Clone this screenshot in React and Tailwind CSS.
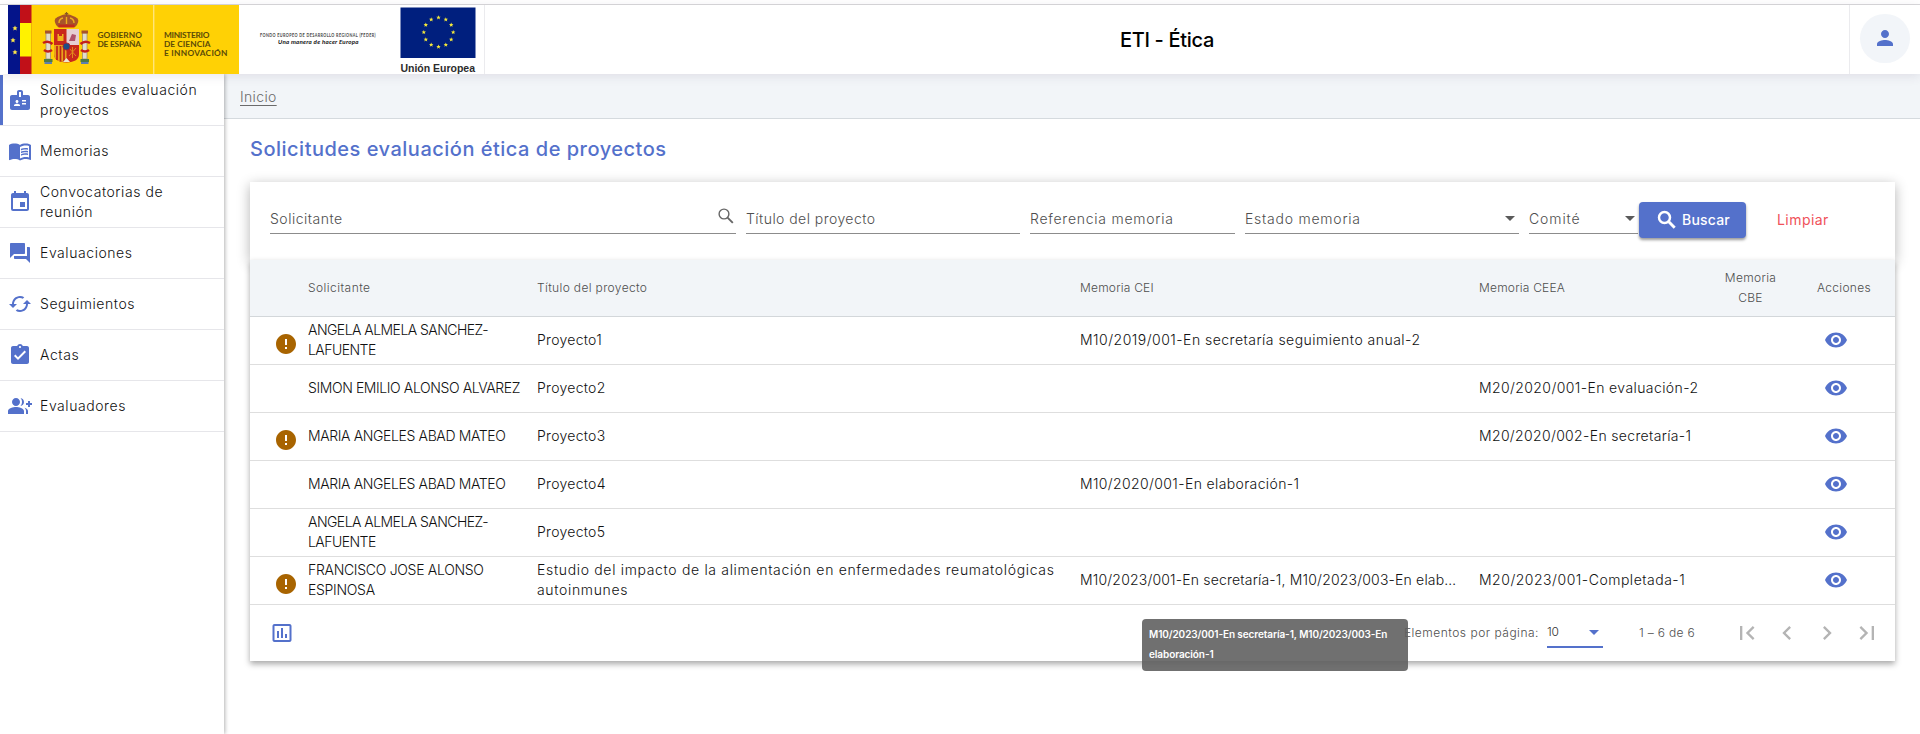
import React from 'react';
import {
  MdBadge, MdMenuBook, MdEvent, MdQuestionAnswer, MdCached, MdAssignmentTurnedIn, MdGroupAdd,
  MdPerson, MdArrowDropDown, MdError, MdRemoveRedEye, MdInsertChartOutlined,
  MdFirstPage, MdChevronLeft, MdChevronRight, MdLastPage,
} from 'react-icons/md';

const NAV = [
  { icon: MdBadge, lines: ['Solicitudes evaluación', 'proyectos'], active: true },
  { icon: MdMenuBook, lines: ['Memorias'] },
  { icon: MdEvent, lines: ['Convocatorias de', 'reunión'] },
  { icon: MdQuestionAnswer, lines: ['Evaluaciones'] },
  { icon: MdCached, lines: ['Seguimientos'] },
  { icon: MdAssignmentTurnedIn, lines: ['Actas'] },
  { icon: MdGroupAdd, lines: ['Evaluadores'] },
];

const ROWS = [
  { warn: true, name: ['ANGELA ALMELA SANCHEZ-', 'LAFUENTE'], title: ['Proyecto1'], cei: 'M10/2019/001-En secretaría seguimiento anual-2', ceea: '', tight: 'tracking-[-0.54px]' },
  { warn: false, name: ['SIMON EMILIO ALONSO ALVAREZ'], title: ['Proyecto2'], cei: '', ceea: 'M20/2020/001-En evaluación-2', tight: 'tracking-[-0.4px]' },
  { warn: true, name: ['MARIA ANGELES ABAD MATEO'], title: ['Proyecto3'], cei: '', ceea: 'M20/2020/002-En secretaría-1', ceeaTracking: 'tracking-[0.34px]', tight: 'tracking-[-0.37px]' },
  { warn: false, name: ['MARIA ANGELES ABAD MATEO'], title: ['Proyecto4'], cei: 'M10/2020/001-En elaboración-1', ceiTracking: 'tracking-[0.37px]', ceea: '', tight: 'tracking-[-0.37px]' },
  { warn: false, name: ['ANGELA ALMELA SANCHEZ-', 'LAFUENTE'], title: ['Proyecto5'], cei: '', ceea: '', tight: 'tracking-[-0.54px]' },
  { warn: true, name: ['FRANCISCO JOSE ALONSO', 'ESPINOSA'], title: ['Estudio del impacto de la alimentación en enfermedades reumatológicas', 'autoinmunes'], cei: 'M10/2023/001-En secretaría-1, M10/2023/003-En elab…', ceiTracking: 'tracking-[0.18px]', ceea: 'M20/2023/001-Completada-1', ceeaTracking: 'tracking-[0.51px]', tight: 'tracking-[-0.3px]' },
];

const GRID = 'grid grid-cols-[58px_229px_543px_399px_239px_65px_112px] items-center border-b';

function Lines({ items }) {
  return items.map((l) => <div key={l} className="whitespace-nowrap">{l}</div>);
}

function SpainLogo() {
  return (
    <svg width="231.500" height="69" viewBox="0 0 231.500 69" className="block shrink-0">
      <rect width="231.500" height="69" fill="#ffd105" />
      <rect width="12" height="69" fill="#04148a" />
      <rect x="12" width="11.5" height="69" fill="#c11018" />
      <rect x="12" y="18" width="11.5" height="33.5" fill="#fff200" />
      <g fill="#fbe44a">
        <path d="M7 20.5l.8 1.7 1.8.2-1.3 1.2.3 1.8L7 24.500l-1.600.9.3-1.800-1.300-1.200 1.800-.2z" />
        <path d="M5 32.500l.8 1.700 1.800.2-1.300 1.200.3 1.800L5 36.500l-1.600.9.3-1.800-1.300-1.200 1.800-.2z" />
        <path d="M7 44.500l.8 1.700 1.800.2-1.300 1.200.3 1.800L7 48.500l-1.600.9.3-1.800-1.300-1.200 1.800-.2z" />
      </g>
      <rect x="145" width="1.400" height="69" fill="#ffe57a" />
      <g>
        <path d="M50 22q-5-5-2.500-8.500Q51 10.500 58.500 9q7.500 1.500 11 4.500Q72 17 67 22z" fill="#a8542a" />
        <path d="M51 18q0-4 4-5M58.500 12v7M66 18q0-4-4-5" stroke="#efae1c" strokeWidth="1.400" fill="none" />
        <rect x="50.500" y="19.500" width="16" height="3" fill="#c22a1c" />
        <path d="M58.500 7v4M56.800 8.500h3.400" stroke="#8a5a20" strokeWidth="1.200" />
        <rect x="38" y="28" width="4.500" height="26" fill="#e2dccb" stroke="#8f8775" strokeWidth=".7" />
        <rect x="74.500" y="28" width="4.500" height="26" fill="#e2dccb" stroke="#8f8775" strokeWidth=".7" />
        <path d="M37 27h6.500M73.500 27H80" stroke="#a8542a" strokeWidth="3" />
        <path d="M36 55.500h8.500M72.500 55.500H81" stroke="#4f7a45" strokeWidth="3" />
        <path d="M36.500 58h7.500M73 58h7.500" stroke="#5d7fb0" strokeWidth="1.800" />
        <path d="M35 38q5-3 9.500 1M82 38q-5-3-9.500 1M36 45q4 3 8 0M81 45q-4 3-8 0" stroke="#c41f1a" strokeWidth="2.600" fill="none" />
        <path d="M46 24h25v25q0 8-12.500 8.500Q46 57 46 49z" fill="#c9281c" />
        <path d="M58.500 24H71v16H58.500z" fill="#e6cfd3" />
        <path d="M61 36l3-7 4 1-1 6z" fill="#b0526b" />
        <path d="M49.500 36v-7h1.500v2h3v-2h1.500v7z" fill="#efb31e" />
        <path d="M46 40h12.500v17Q46 57 46 49z" fill="#e8a31c" />
        <path d="M49 41v14M52.500 41v15.500M56 41v16" stroke="#bf2418" strokeWidth="1.700" />
        <path d="M61 43l7 8M68 43l-7 8M64.500 42v11" stroke="#e3881d" strokeWidth="1" />
        <circle cx="58.500" cy="41.500" r="3.600" fill="#1f4d86" stroke="#b3202a" strokeWidth=".9" />
        <path d="M55 57l3.500-4 3.500 4z" fill="#efe6cf" />
      </g>
      <g fill="#5a4a08" fontFamily="Lato, 'Liberation Sans', sans-serif" fontWeight="700" fontSize="8.300">
        <text x="89.500" y="32.500" textLength="45">GOBIERNO</text>
        <text x="89.500" y="41.500" textLength="44">DE ESPAÑA</text>
        <text x="156" y="32.500" textLength="46">MINISTERIO</text>
        <text x="156" y="41.500" textLength="47">DE CIENCIA</text>
        <text x="156" y="50.500" textLength="64">E INNOVACIÓN</text>
      </g>
    </svg>
  );
}

const STAR = 'M0-2.300l.6 1.500 1.600.1-1.200 1 .4 1.600L0 1l-1.400.9.4-1.600-1.200-1 1.600-.1z';

function EuLogo() {
  return (
    <svg width="230" height="69" viewBox="0 0 230 69" className="block shrink-0">
      <g fontFamily="Lato, 'Liberation Sans', sans-serif">
        <text x="14" y="31.500" fontSize="4.700" fontWeight="700" fill="#444" textLength="116" lengthAdjust="spacingAndGlyphs">FONDO EUROPEO DE DESARROLLO REGIONAL (FEDER)</text>
        <text x="32" y="38.800" fontSize="6.200" fontWeight="700" fontStyle="italic" fill="#111" textLength="81">Una manera de hacer Europa</text>
      </g>
      <rect x="154.500" y="2.500" width="75" height="50.500" fill="#001f7e" />
      <g fill="#f5e93a">
        <path d={STAR} transform="translate(192.500 12.500)" />
        <path d={STAR} transform="translate(199.800 14.500)" />
        <path d={STAR} transform="translate(205.200 19.900)" />
        <path d={STAR} transform="translate(207.200 27.200)" />
        <path d={STAR} transform="translate(205.200 34.500)" />
        <path d={STAR} transform="translate(199.800 39.800)" />
        <path d={STAR} transform="translate(192.500 41.800)" />
        <path d={STAR} transform="translate(185.200 39.800)" />
        <path d={STAR} transform="translate(179.800 34.500)" />
        <path d={STAR} transform="translate(177.800 27.200)" />
        <path d={STAR} transform="translate(179.800 19.900)" />
        <path d={STAR} transform="translate(185.200 14.500)" />
      </g>
      <text x="154.500" y="66.500" fontFamily="'Liberation Sans', sans-serif" fontWeight="700" fontSize="10.500" fill="#2c2c2c" textLength="75">Unión Europea</text>
    </svg>
  );
}

function Field({ label, width, tracking, children }) {
  return (
    <div className={`flex h-[26px] items-start justify-between border-b border-[#8c8c8c] text-[#4e4e4e] ${width}`}>
      <span className={`mt-px whitespace-nowrap ${tracking || ''}`}>{label}</span>
      {children}
    </div>
  );
}

export default function App() {
  return (
    <div className="relative flex h-[734px] w-[1920px] flex-col overflow-hidden bg-white font-['Inter','Liberation_Sans',sans-serif] text-sm font-light leading-5 tracking-[0.5px] text-[#111]">
      <div className="h-[5px] shrink-0 border-b border-[#d9d9db]" />
      <header className="relative z-10 flex h-[69px] shrink-0 bg-white shadow-[0_2px_10px_rgba(80,60,100,0.12)]">
        <div className="flex w-[485px] border-r border-[#ebebee] pl-[7.5px]">
          <SpainLogo />
          <div className="pl-[6.500px]"><EuLogo /></div>
        </div>
        <div className="flex flex-1 justify-center pt-[21px]">
          <h1 className="text-xl font-medium leading-7 tracking-[-0.3px] text-black">ETI - Ética</h1>
        </div>
        <div className="flex w-[71px] border-l border-[#ebebee] pl-[10px] pt-[9px]">
          <div className="flex h-[49px] w-[50px] items-center justify-center rounded-full bg-[#f2f5f9] pb-0.5 text-[#5471cb]">
            <MdPerson size={24} />
          </div>
        </div>
      </header>

      <div className="flex min-h-0 flex-1">
        <nav className="relative z-[5] w-[224px] shrink-0 bg-white pt-px shadow-[1px_0_4px_rgba(0,0,0,0.3)]">
          {NAV.map(({ icon: Icon, lines, active }) => (
            <div key={lines[0]} className="flex h-[51px] items-center border-b border-[#e6e6ea]">
              <div className={`h-full w-[3px] ${active ? 'bg-[#5471cb]' : ''}`} />
              <Icon size={24} className="ml-[5px] shrink-0 text-[#5471cb]" />
              <div className="pl-2 tracking-[0.56px]"><Lines items={lines} /></div>
            </div>
          ))}
        </nav>

        <main className="min-w-0 flex-1">
          <div className="h-[45px] border-b border-[#d5dade] bg-[#f2f5f8] pl-4 pt-[13px]">
            <a className="tracking-[0.35px] text-[#6b6b6b] underline underline-offset-[3px]">Inicio</a>
          </div>
          <h2 className="ml-[26px] mt-4 text-xl font-medium leading-7 tracking-[0.5px] text-[#5471cb]">Solicitudes evaluación ética de proyectos</h2>

          <section className="ml-[26px] mt-[19px] flex h-[78px] w-[1645px] items-start bg-white pl-5 pt-5 shadow-[0_3px_12px_rgba(0,0,0,0.3)]">
            <div className="flex gap-2.5 pt-1.5">
              <Field label="Solicitante" width="w-[466px]">
                <svg width="20" height="20" viewBox="0 0 20 20" className="-mt-0.5" fill="none" stroke="#666" strokeWidth="1.400">
                  <circle cx="8" cy="8" r="4.900" />
                  <path d="M11.600 11.600l5.200 5.200" strokeWidth="1.900" />
                </svg>
              </Field>
              <Field label="Título del proyecto" width="w-[274px]" tracking="tracking-[0.45px]" />
              <Field label="Referencia memoria" width="w-[205px]" tracking="tracking-[0.74px]" />
              <Field label="Estado memoria" width="w-[274px]" tracking="tracking-[0.76px]"><MdArrowDropDown size={24} className="-mr-[3px] -mt-0.5 text-[#5a5a5a]" /></Field>
              <Field label="Comité" width="w-[109px]" tracking="tracking-[0.9px]"><MdArrowDropDown size={24} className="-mr-1 -mt-0.5 text-[#5a5a5a]" /></Field>
            </div>
            <button className="ml-px flex h-9 w-[107px] items-center rounded bg-[#5471cb] pl-4 font-medium tracking-[0.2px] text-white shadow-[0_2px_3px_rgba(0,0,0,0.4)]">
              <svg width="24" height="24" viewBox="0 0 24 24" fill="none" stroke="currentColor" strokeWidth="2.500">
                <circle cx="9.500" cy="9.500" r="5.500" />
                <path d="M13.800 13.800l5.900 5.900" strokeWidth="2.900" />
              </svg>
              <span className="ml-[3px]">Buscar</span>
            </button>
            <span className="ml-[31px] pt-2 font-normal tracking-[0.45px] text-[#f0525a]">Limpiar</span>
          </section>

          <section className="relative ml-[26px] w-[1645px] bg-white shadow-[0_3px_6px_rgba(0,0,0,0.35)]">
            <div className={`${GRID} h-[57px] border-[#d3d7da] bg-[#f2f5f8] pb-px text-xs leading-5 text-[#4e4e4e]`}>
              <div />
              <div className="tracking-[0.45px]">Solicitante</div>
              <div className="tracking-[0.35px]">Título del proyecto</div>
              <div className="tracking-[0.2px]">Memoria CEI</div>
              <div className="tracking-[0.2px]">Memoria CEEA</div>
              <div className="text-center tracking-[0.3px]">Memoria<br />CBE</div>
              <div className="pl-[34px] tracking-[0.3px]">Acciones</div>
            </div>
            {ROWS.map((r, i) => (
              <div key={i} className={`${GRID} h-12 border-[#dedede] pb-0.5`}>
                <div className="flex justify-end pr-[10px] pt-[8px]">{r.warn && <MdError size={24} className="text-[#a86400]" />}</div>
                <div className={r.tight}><Lines items={r.name} /></div>
                <div className={r.title.length > 1 ? 'tracking-[0.67px]' : 'tracking-[0.28px]'}><Lines items={r.title} /></div>
                <div className={`whitespace-nowrap ${r.ceiTracking || 'tracking-[0.48px]'}`}>{r.cei}</div>
                <div className={`whitespace-nowrap ${r.ceeaTracking || 'tracking-[0.4px]'}`}>{r.ceea}</div>
                <div />
                <div className="pl-[41px] pt-px"><MdRemoveRedEye size={24} className="text-[#5471cb]" /></div>
              </div>
            ))}
            <div className="flex h-14 items-center pl-5 pr-2 text-xs leading-5 text-[#4e4e4e]">
              <MdInsertChartOutlined size={24} className="text-[#5471cb]" />
              <span className="ml-auto tracking-[0.5px]">Elementos por página:</span>
              <div className="ml-2 mt-1 flex h-[26px] w-14 items-start justify-between border-b-2 border-[#5471cb]">
                <span className="tracking-[-0.3px] text-[#333]">10</span>
                <MdArrowDropDown size={24} className="-mr-[3px] -mt-0.5 text-[#5471cb]" />
              </div>
              <span className="ml-9 mr-8 tracking-[0.32px]">1 – 6 de 6</span>
              <div className="flex text-[#b4b4b4]">
                {[MdFirstPage, MdChevronLeft, MdChevronRight, MdLastPage].map((Icon, i) => (
                  <span key={i} className="flex size-10 items-center justify-center"><Icon size={28} /></span>
                ))}
              </div>
            </div>
          </section>
        </main>
      </div>

      <div className="absolute left-[1142px] top-[619px] z-20 h-[52px] w-[266px] rounded bg-[#616161]/90 pl-[7px] pt-[5px] text-[10px] font-semibold leading-5 tracking-[-0.09px] text-white">
        M10/2023/001-En secretaría-1, M10/2023/003-En<br />elaboración-1
      </div>
    </div>
  );
}
